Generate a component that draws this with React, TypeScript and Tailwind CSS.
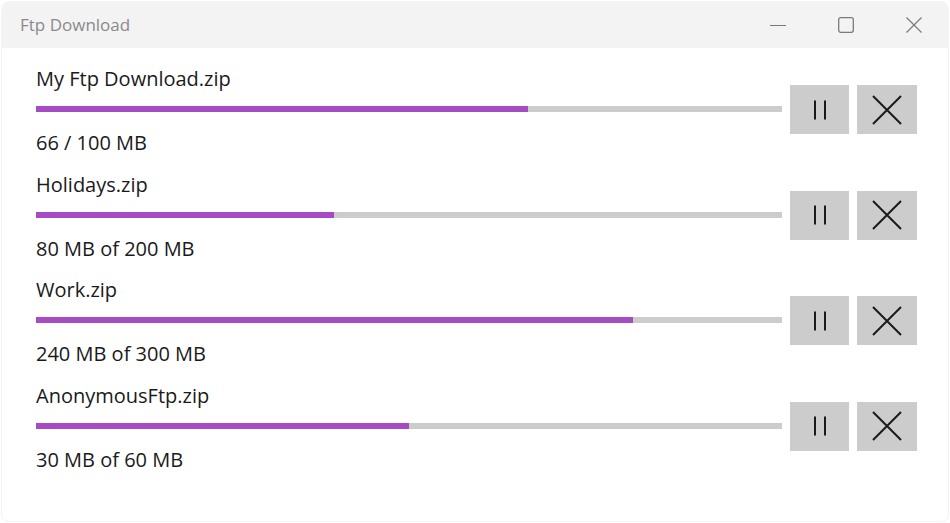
type Download = {
  name: string;
  status: string;
  progress: number;
};

const downloads: Download[] = [
  { name: 'My Ftp Download.zip', status: '66 / 100 MB', progress: 66 },
  { name: 'Holidays.zip', status: '80 MB of 200 MB', progress: 40 },
  { name: 'Work.zip', status: '240 MB of 300 MB', progress: 80 },
  { name: 'AnonymousFtp.zip', status: '30 MB of 60 MB', progress: 50 },
];

const PauseIcon = () => (
  <svg width="14" height="20" viewBox="0 0 14 20" fill="none">
    <rect x="1" y="0.5" width="2" height="19" fill="#1a1a1a" />
    <rect x="11" y="0.5" width="2" height="19" fill="#1a1a1a" />
  </svg>
);

const CloseIcon = () => (
  <svg width="30" height="30" viewBox="0 0 30 30" fill="none">
    <path d="M1 1L29 29M29 1L1 29" stroke="#1a1a1a" strokeWidth="2" />
  </svg>
);

const CaptionMin = () => (
  <svg width="16" height="16" viewBox="0 0 16 16" fill="none">
    <path d="M0 8.5H16" stroke="#7a7a7a" strokeWidth="1.2" />
  </svg>
);

const CaptionMax = () => (
  <svg width="16" height="16" viewBox="0 0 16 16" fill="none">
    <rect x="0.7" y="0.7" width="14.6" height="14.6" rx="2" stroke="#7a7a7a" strokeWidth="1.3" />
  </svg>
);

const CaptionClose = () => (
  <svg width="16" height="16" viewBox="0 0 16 16" fill="none">
    <path d="M0.5 0.5L15.5 15.5M15.5 0.5L0.5 15.5" stroke="#7a7a7a" strokeWidth="1.2" />
  </svg>
);

const DownloadRow = ({ item }: { item: Download }) => (
  <div className="flex items-start">
    <div className="flex-1 flex flex-col">
      <span className="h-[28px] leading-[28px] text-[20px] text-[#1a1a1a]">
        {item.name}
      </span>
      <div className="mt-[13px] h-[6px] w-full bg-[#cccccc]">
        <div
          className="h-full bg-[#a64bc3]"
          style={{ width: `${item.progress}%` }}
        />
      </div>
      <span className="mt-[17px] h-[28px] leading-[28px] text-[20px] text-[#1a1a1a]">
        {item.status}
      </span>
    </div>
    <div className="mt-[20px] ml-[8px] flex gap-[8px]">
      <button className="w-[59px] h-[49px] bg-[#cccccc] flex items-center justify-center">
        <PauseIcon />
      </button>
      <button className="w-[60px] h-[49px] bg-[#cccccc] flex items-center justify-center">
        <CloseIcon />
      </button>
    </div>
  </div>
);

export default function App() {
  return (
    <div
      className="w-[950px] h-[523px] bg-white p-[1px]"
      style={{ fontFamily: '"Open Sans", "Noto Sans", sans-serif' }}
    >
      <div className="h-full w-full rounded-[8px] border border-[#f3f3f3] bg-white overflow-hidden flex flex-col">
        <div className="h-[46px] bg-[#f3f3f3] flex items-center shrink-0">
          <span className="ml-[18px] flex-1 text-[17px] text-[#8a8a8a]">
            Ftp Download
          </span>
          <div className="flex h-full">
            <div className="w-[68px] flex items-center justify-center">
              <CaptionMin />
            </div>
            <div className="w-[68px] flex items-center justify-center">
              <CaptionMax />
            </div>
            <div className="w-[68px] flex items-center justify-center">
              <CaptionClose />
            </div>
          </div>
        </div>
        <div className="pl-[34px] pr-[31px] pt-[17px] flex flex-col gap-[13.5px]">
          {downloads.map((d) => (
            <DownloadRow key={d.name} item={d} />
          ))}
        </div>
      </div>
    </div>
  );
}
